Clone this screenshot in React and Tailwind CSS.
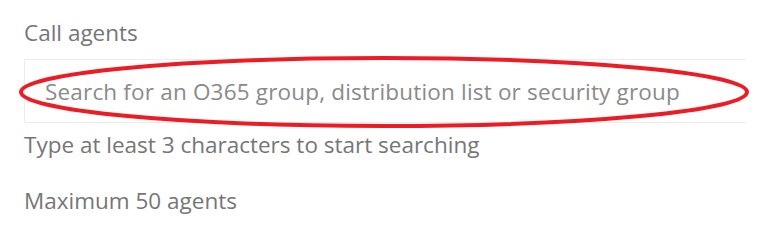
import React from 'react';

export default function App() {
    return (
        <div className="relative w-[769px] h-[226px] bg-white overflow-hidden" style={{ fontFamily: '"Open Sans", "Noto Sans", sans-serif' }}>
            <div className="flex flex-col pl-6 pt-[17px] text-[22.5px] text-[#767676]">
                <p className="leading-[32px]">Call agents</p>
                <div className="mt-[10px] w-[722px] h-[64px] flex items-center pl-5 border border-r-0 border-[#ececec]">
                    <span className="pt-[1px] tracking-[0.18px] text-[#8a8a8a]">Search for an O365 group, distribution list or security group</span>
                </div>
                <p className="mt-[6px] leading-[32px]">Type at least 3 characters to start searching</p>
                <p className="mt-[24px] leading-[32px]">Maximum 50 agents</p>
            </div>
            {/* red annotation ring */}
            <svg className="absolute left-0 top-0 pointer-events-none" width="769" height="226">
                <ellipse cx="384" cy="92" rx="363" ry="34" fill="none" stroke="#ed1c24" strokeWidth="4" />
            </svg>
        </div>
    );
}
